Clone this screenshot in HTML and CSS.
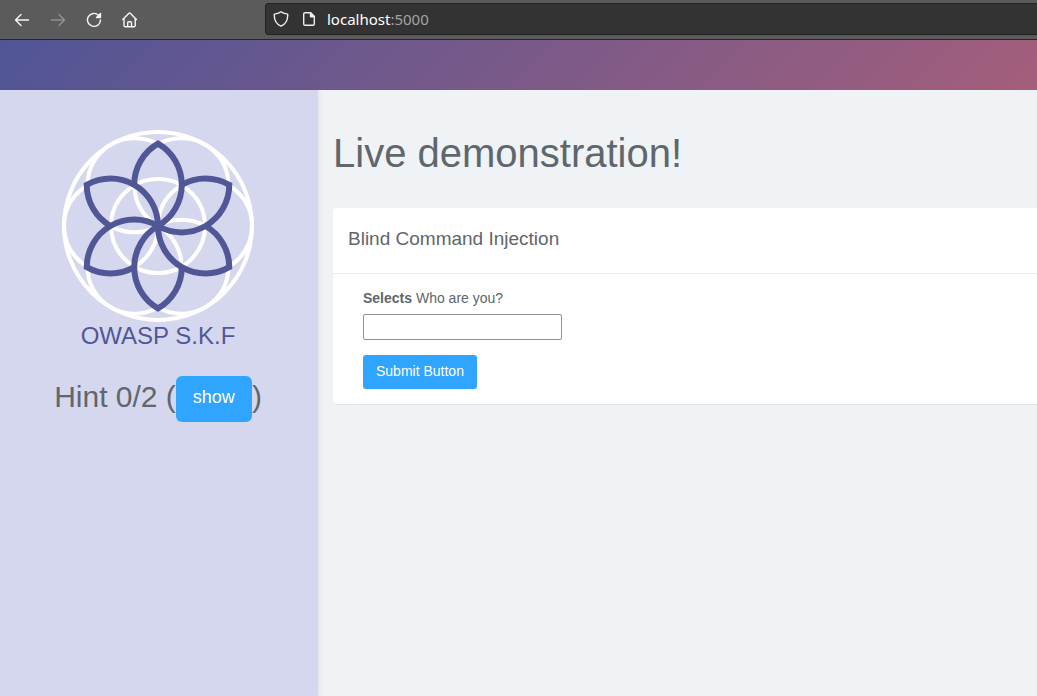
FILE: index.html
```html
<!DOCTYPE html>
<html lang="en">
<head>
<meta charset="utf-8">
<title>Live demonstration</title>
<link rel="stylesheet" href="styles.css">
</head>
<body>
<div class="toolbar">
  <div class="nav-buttons">
    <button class="nav-button" type="button" aria-label="Back"><svg viewBox="0 0 16 16"><path d="M14.500 8H1.500M7 2.500 1.500 8 7 13.500"/></svg></button>
    <button class="nav-button" type="button" aria-label="Forward" disabled><svg viewBox="0 0 16 16"><path d="M1.500 8h13M9 2.500 14.500 8 9 13.500"/></svg></button>
    <button class="nav-button" type="button" aria-label="Reload"><svg viewBox="0 0 16 16"><path d="M12.500 3.200A6.500 6.500 0 1 0 14.500 8"/><path class="solid" d="M14.500 1.500v4h-4z"/></svg></button>
    <button class="nav-button" type="button" aria-label="Home"><svg viewBox="0 0 16 16"><path d="M.8 7.500 6.900 1.300a1 1 0 0 1 1.400 0l6.100 6.200M2 6.500v7A1.200 1.200 0 0 0 3.200 14.700h8.800a1.200 1.200 0 0 0 1.200-1.200v-7M5.700 14.700v-4a1 1 0 0 1 1-1h1.800a1 1 0 0 1 1 1v4"/></svg></button>
  </div>
  <div class="address">
    <div class="address-icons">
      <svg viewBox="0 0 16 16"><path d="M8 .8c2 1.700 4.200 2 6.700 2.400.3 5.500-1.500 9.800-6.700 12C2.800 13 1 8.700 1.300 3.200 3.800 2.800 6 2.500 8 .8z"/></svg>
      <svg viewBox="0 0 16 16"><path d="M9.500 1.700H4a1.300 1.300 0 0 0-1.300 1.300v10A1.300 1.300 0 0 0 4 14.300h8a1.300 1.300 0 0 0 1.300-1.300V5.500z"/><path class="solid" d="M9.500 1.700v4h4z"/></svg>
    </div>
    <span class="url">localhost<span class="port">:5000</span></span>
  </div>
</div>
<header class="banner"></header>
<div class="layout">
  <aside class="sidebar">
    <svg class="logo" viewBox="-96 -96 192 192" role="img" aria-label="OWASP S.K.F">
      <defs><path id="petal" d="M-23.800-41.200A47.500 47.500 0 0 1 0-82.300A47.500 47.500 0 0 1 0 0"/></defs>
      <g class="rings">
        <circle r="94"/><circle r="47"/>
        <circle cx="47" r="47"/><circle cx="-47" r="47"/>
        <circle cx="23.500" cy="40.700" r="47"/><circle cx="-23.500" cy="40.700" r="47"/>
        <circle cx="23.500" cy="-40.700" r="47"/><circle cx="-23.500" cy="-40.700" r="47"/>
      </g>
      <g class="petals">
        <use href="#petal"/><use href="#petal" transform="rotate(60)"/><use href="#petal" transform="rotate(120)"/>
        <use href="#petal" transform="rotate(180)"/><use href="#petal" transform="rotate(240)"/><use href="#petal" transform="rotate(300)"/>
      </g>
    </svg>
    <div class="brand">OWASP S.K.F</div>
    <div class="hint"><span>Hint 0/2 (</span><button class="button button-large" type="button">show</button><span>)</span></div>
  </aside>
  <main class="content">
    <h1 class="title">Live demonstration!</h1>
    <section class="card">
      <h2 class="card-title">Blind Command Injection</h2>
      <form class="card-body">
        <label class="label" for="who"><strong>Selects</strong> Who are you?</label>
        <input class="field" id="who" type="text">
        <button class="button" type="button">Submit Button</button>
      </form>
    </section>
  </main>
</div>
</body>
</html>
```
FILE: styles.css
```css
* { box-sizing: border-box; }

body {
  margin: 0;
  min-height: 100vh;
  display: flex;
  flex-direction: column;
  overflow-x: hidden;
  background: #eff3f6;
  color: #5f666c;
  font: 14px/20px "Liberation Sans", Arial, sans-serif;
}

.toolbar {
  display: flex;
  height: 40px;
  padding-top: 3px;
  background: #5b5b5b;
  border-bottom: 1px solid #27262a;
}

.nav-buttons {
  display: flex;
  width: 265px;
  gap: 20px;
  padding: 9px 0 0 14px;
  flex: none;
}

.nav-button {
  width: 16px;
  height: 16px;
  padding: 0;
  border: 0;
  background: none;
  color: #f6f6f6;
}

.nav-button:disabled { color: #919191; }

.toolbar svg {
  display: block;
  width: 16px;
  height: 16px;
  fill: none;
  stroke: currentColor;
  stroke-width: 1.4;
  stroke-linecap: round;
  stroke-linejoin: round;
}

.toolbar .solid { fill: currentColor; }

.address {
  display: flex;
  flex: 1;
  align-items: center;
  gap: 10px;
  height: 32px;
  padding-left: 7px;
  background: #333;
  border: 1px solid #222;
  border-right: 0;
  border-radius: 4px 0 0 4px;
  color: #eee;
}

.address-icons {
  display: flex;
  gap: 12px;
}

.url {
  color: #fff;
  font: 15px/20px "Noto Sans", sans-serif;
}

.port { color: #a3a3a3; }

.banner {
  height: 50px;
  background: linear-gradient(135deg, #505596, #a45e7b);
}

.layout {
  display: flex;
  flex: 1;
}

.sidebar {
  display: flex;
  flex-direction: column;
  align-items: center;
  width: 318px;
  flex: none;
  padding: 40px 2px 0 0;
  background: #d5d7ee;
  box-shadow: 2px 0 5px rgba(0, 0, 0, 0.06);
}

.logo {
  display: block;
  width: 192px;
  height: 192px;
}

.rings { fill: none; stroke: #fff; stroke-width: 4; }
.petals { fill: none; stroke: #515796; stroke-width: 6; }

.brand {
  color: #515796;
  font-size: 24px;
  line-height: 28px;
}

.hint {
  display: flex;
  margin-top: 26px;
  font-size: 30px;
  line-height: 42px;
}

.button {
  display: block;
  height: 34px;
  padding: 0 13px 2px;
  border: 0;
  border-radius: 3px;
  background: #30a5ff;
  color: #fff;
  font: 14px/20px "Liberation Sans", Arial, sans-serif;
}

.button-large {
  height: 46px;
  padding: 0 17px 4px;
  border-radius: 6px;
  font-size: 18px;
}

.content {
  flex: 1;
  min-width: 0;
  padding: 40px 0 0 15px;
}

.title {
  margin: 0 0 32px;
  font-size: 40px;
  font-weight: 400;
  line-height: 46px;
}

.card {
  background: #fff;
  border-radius: 4px 0 0 4px;
  box-shadow: 0 1px 1px rgba(0, 0, 0, 0.05);
}

.card-title {
  margin: 0;
  padding: 20px 15px 23px;
  border-bottom: 1px solid #e9ecef;
  font-size: 19px;
  font-weight: 400;
  line-height: 22px;
}

.card-body {
  display: flex;
  flex-direction: column;
  align-items: flex-start;
  padding: 14px 30px 15px;
}

.field {
  width: 199px;
  height: 26px;
  margin: 6px 0 15px;
  padding: 1px 4px;
  border: 1px solid #8f8f9d;
  border-radius: 2px;
  background: #fff;
  color: inherit;
  font: inherit;
}
```
